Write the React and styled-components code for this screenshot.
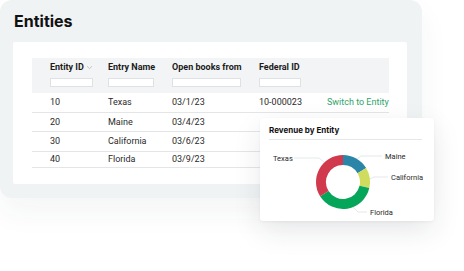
import React from "react";
import styled, { createGlobalStyle } from "styled-components";

const GlobalStyle = createGlobalStyle`
  html, body {
    margin: 0;
    padding: 0;
    background: #ffffff;
  }
  body {
    font-family: Inter, "Liberation Sans", sans-serif;
    color: #222;
  }
`;

const tableFont = `Roboto, "Liberation Sans", sans-serif`;

// Layout
const Stage = styled.div`
  position: relative;
  width: 464px;
  height: 271px;
  overflow: hidden;
`;

const Panel = styled.div`
  width: 422px;
  height: 198px;
  box-sizing: border-box;
  padding: 13px 15px 14px 13px;
  background: #f0f3f4;
  border-radius: 12px;
  box-shadow: 0 14px 30px rgba(40, 50, 60, 0.05);
  display: flex;
  flex-direction: column;
`;

const Title = styled.h1`
  margin: 0 0 13px 1px;
  font-size: 16px;
  line-height: 16px;
  font-weight: 700;
  color: #111;
`;

const Card = styled.div`
  flex: 1;
  background: #fff;
  border-radius: 2px;
  padding: 16px 18px 0 19px;
`;

// Table
const Grid = styled.div`
  display: grid;
  grid-template-columns: 58px 64px 87px 68px 1fr;
  padding-left: 18px;
  align-items: center;
  font-family: ${tableFont};
`;

const HeadRow = styled(Grid)`
  background: #f3f4f5;
  height: 35px;
  box-sizing: border-box;
  padding-top: 4px;
  padding-bottom: 6px;
  align-items: start;
`;

const HeadCell = styled.div`
  display: flex;
  flex-direction: column;
  gap: 5px;
`;

const HeadLabel = styled.span`
  display: flex;
  align-items: center;
  gap: 2px;
  font-size: 9px;
  line-height: 11px;
  font-weight: 700;
  color: #1c1c1c;
  white-space: nowrap;
`;

const Filter = styled.div`
  width: ${(p) => p.$w}px;
  height: 9px;
  box-sizing: border-box;
  background: #fff;
  border: 1px solid #dfe2e5;
`;

const Row = styled(Grid)`
  height: ${(p) => p.$h}px;
  border-bottom: 1px solid #e3e6e9;
  box-sizing: border-box;
`;

const Cell = styled.span`
  font-size: 9px;
  line-height: 11px;
  color: #2a2a2a;
  white-space: nowrap;
`;

const LinkCell = styled(Cell)`
  color: #2fa36c;
`;

// Chart card
const ChartCard = styled.div`
  position: absolute;
  left: 260px;
  top: 118px;
  width: 174px;
  height: 103px;
  background: #fff;
  border-radius: 3px;
  box-shadow: 0 10px 28px rgba(30, 40, 50, 0.1), 0 1px 3px rgba(30, 40, 50, 0.05);
  display: flex;
  flex-direction: column;
`;

const ChartTitle = styled.div`
  margin: 7px 12px 0 9px;
  padding-bottom: 4px;
  border-bottom: 1px solid #e4e7ea;
  font-size: 8px;
  line-height: 10px;
  font-weight: 700;
  color: #111;
`;

const ChartLabel = styled.text`
  font-family: ${tableFont};
  font-size: 7.5px;
  fill: #2a2a2a;
`;

const headers = [
  { label: "Entity ID", w: 43, sort: true },
  { label: "Entry Name", w: 46 },
  { label: "Open books from", w: 69 },
  { label: "Federal ID", w: 42 },
];

const rows = [
  { id: "10", name: "Texas", date: "03/1/23", fed: "10-000023", link: true, h: 20 },
  { id: "20", name: "Maine", date: "03/4/23", h: 19 },
  { id: "30", name: "California", date: "03/6/23", h: 20 },
  { id: "40", name: "Florida", date: "03/9/23", h: 16 },
];

const slices = [
  { from: 0, to: 59, color: "#2a85a8" },
  { from: 59, to: 103, color: "#cfdc5e" },
  { from: 103, to: 238, color: "#05a659" },
  { from: 238, to: 360, color: "#d03a4c" },
];

const CX = 83;
const CY = 42;
const R = 22;

const pt = (deg) => {
  const a = (deg * Math.PI) / 180;
  return [CX + R * Math.sin(a), CY - R * Math.cos(a)];
};

const arc = (from, to) => {
  const [x1, y1] = pt(from);
  const [x2, y2] = pt(to);
  const large = to - from > 180 ? 1 : 0;
  return `M ${x1} ${y1} A ${R} ${R} 0 ${large} 1 ${x2} ${y2}`;
};

const Chevron = () => (
  <svg width="7" height="5" viewBox="0 0 7 5">
    <path d="M1 1.2 L3.5 3.6 L6 1.2" fill="none" stroke="#b5bac0" strokeWidth="0.8" />
  </svg>
);

const Donut = () => (
  <svg width="174" height="81" viewBox="0 0 174 81">
    {slices.map((s) => (
      <path key={s.color} d={arc(s.from, s.to)} fill="none" stroke={s.color} strokeWidth="10" />
    ))}
    <g fill="none" stroke="#dde1e5" strokeWidth="0.8">
      <polyline points="34,18 59,18 64,22" />
      <polyline points="97,19 101,16 122,16" />
      <polyline points="110,39 114,37 128,37" />
      <polyline points="93,67 98,72 107,72" />
    </g>
    <ChartLabel x="13" y="20.5">Texas</ChartLabel>
    <ChartLabel x="125" y="18.5">Maine</ChartLabel>
    <ChartLabel x="131" y="39.5">California</ChartLabel>
    <ChartLabel x="110" y="74.5">Florida</ChartLabel>
  </svg>
);

export default function App() {
  return (
    <>
      <GlobalStyle />
      <Stage>
        <Panel>
          <Title>Entities</Title>
          <Card>
            <HeadRow>
              {headers.map((h) => (
                <HeadCell key={h.label}>
                  <HeadLabel>
                    {h.label}
                    {h.sort && <Chevron />}
                  </HeadLabel>
                  <Filter $w={h.w} />
                </HeadCell>
              ))}
            </HeadRow>
            {rows.map((r) => (
              <Row key={r.id} $h={r.h}>
                <Cell>{r.id}</Cell>
                <Cell>{r.name}</Cell>
                <Cell>{r.date}</Cell>
                <Cell>{r.fed || ""}</Cell>
                {r.link ? <LinkCell>Switch to Entity</LinkCell> : <span />}
              </Row>
            ))}
          </Card>
        </Panel>
        <ChartCard>
          <ChartTitle>Revenue by Entity</ChartTitle>
          <Donut />
        </ChartCard>
      </Stage>
    </>
  );
}
